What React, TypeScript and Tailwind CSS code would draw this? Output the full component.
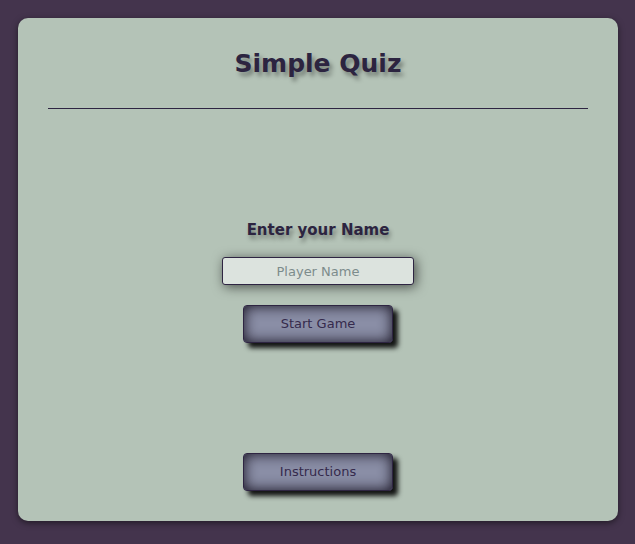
const App = () => {
  return (
    <div className="min-h-[544px] w-full bg-[#44344d] pt-[18px] pb-[23px] px-[18px] font-['DejaVu_Sans',Verdana,sans-serif]">
      <div className="w-[600px] h-[503px] bg-[#b4c3b7] rounded-[10px] shadow-[0_2px_6px_rgba(0,0,0,0.5)] px-[30px] pt-[30px] pb-[30px] flex flex-col">
        <h1 className="h-[32px] leading-[32px] text-center text-[25px] font-bold text-[#2c2440] [text-shadow:3px_4px_4px_rgba(0,0,0,0.35)]">
          Simple Quiz
        </h1>
        <hr className="mt-[28px] border-0 h-px bg-[#2e2542]" />

        <div className="flex flex-col items-center">
          <h2 className="mt-[111px] h-[20px] leading-[20px] text-[15px] font-bold text-[#2c2440] [text-shadow:2px_4px_4px_rgba(0,0,0,0.35)]">
            Enter your Name
          </h2>
          <input
            type="text"
            placeholder="Player Name"
            className="mt-[17px] w-[192px] h-[28px] bg-[#dce3de] border border-[#2e2542] rounded-[3px] text-center text-[13px] text-[#2c2440] placeholder:text-[#7c8c8c] shadow-[2px_2px_12px_rgba(0,0,0,0.6)] outline-none"
          />
          <button className="mt-[20px] w-[150px] h-[38px] bg-[#8a8ea6] border border-[#2e2542] rounded-[4px] text-[13px] text-[#352a4c] shadow-[inset_0_0_14px_#15101f,5px_5px_5px_rgba(0,0,0,0.9)]">
            Start Game
          </button>
          <button className="mt-[110px] w-[150px] h-[38px] bg-[#8a8ea6] border border-[#2e2542] rounded-[4px] text-[13px] text-[#352a4c] shadow-[inset_0_0_14px_#15101f,5px_5px_5px_rgba(0,0,0,0.9)]">
            Instructions
          </button>
        </div>
      </div>
    </div>
  );
};

export default App;
